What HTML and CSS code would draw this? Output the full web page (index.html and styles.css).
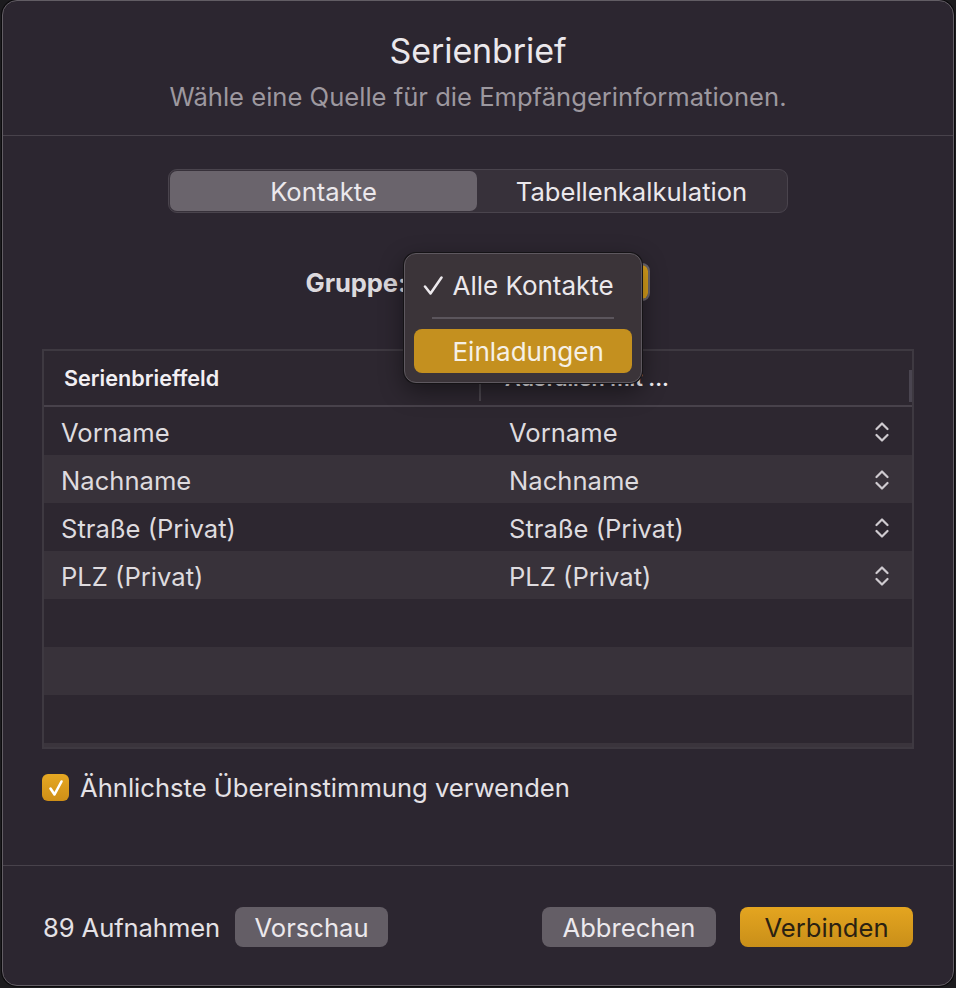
FILE: index.html
```html
<!DOCTYPE html>
<html lang="de">
<head>
<meta charset="utf-8">
<title>Serienbrief</title>
<link rel="stylesheet" href="styles.css">
</head>
<body>
<div class="window">
  <header class="sheet-head">
    <h1 class="title">Serienbrief</h1>
    <p class="subtitle">Wähle eine Quelle für die Empfängerinformationen.</p>
  </header>

  <main class="sheet-body">
    <div class="segmented">
      <div class="seg seg-active">Kontakte</div>
      <div class="seg">Tabellenkalkulation</div>
    </div>

    <div class="group-row">
      <span class="group-label">Gruppe:</span>
      <div class="popup-wrap">
        <div class="popup">
          <span class="popup-text"></span>
          <span class="popup-arrow"></span>
        </div>
        <div class="menu">
          <div class="menu-item">
            <svg class="menu-check" width="20" height="20" viewBox="0 0 20 20"><polyline points="2,10.5 7.5,17.5 18.5,1.5" fill="none" stroke="#ece9ed" stroke-width="2.5" stroke-linecap="round" stroke-linejoin="round"/></svg>
            <span>Alle Kontakte</span>
          </div>
          <div class="menu-sep"></div>
          <div class="menu-item menu-item-hl"><span>Einladungen</span></div>
        </div>
      </div>
    </div>

    <div class="table">
      <div class="thead">
        <div class="th th-first">Serienbrieffeld</div>
        <div class="th-divider"></div>
        <div class="th th-second">Ausfüllen mit ...</div>
        <div class="th-bar"></div>
      </div>
      <div class="row">
        <div class="cell">Vorname</div><div class="cell">Vorname</div>
        <svg class="stepper" width="14" height="22" viewBox="0 0 14 22"><polyline points="1.5,8 7,2.5 12.5,8" fill="none" stroke="#cfcbd0" stroke-width="2.2" stroke-linecap="round" stroke-linejoin="round"/><polyline points="1.5,14 7,19.5 12.5,14" fill="none" stroke="#cfcbd0" stroke-width="2.2" stroke-linecap="round" stroke-linejoin="round"/></svg>
      </div>
      <div class="row row-alt">
        <div class="cell">Nachname</div><div class="cell">Nachname</div>
        <svg class="stepper" width="14" height="22" viewBox="0 0 14 22"><polyline points="1.5,8 7,2.5 12.5,8" fill="none" stroke="#cfcbd0" stroke-width="2.2" stroke-linecap="round" stroke-linejoin="round"/><polyline points="1.5,14 7,19.5 12.5,14" fill="none" stroke="#cfcbd0" stroke-width="2.2" stroke-linecap="round" stroke-linejoin="round"/></svg>
      </div>
      <div class="row">
        <div class="cell">Straße (Privat)</div><div class="cell">Straße (Privat)</div>
        <svg class="stepper" width="14" height="22" viewBox="0 0 14 22"><polyline points="1.5,8 7,2.5 12.5,8" fill="none" stroke="#cfcbd0" stroke-width="2.2" stroke-linecap="round" stroke-linejoin="round"/><polyline points="1.5,14 7,19.5 12.5,14" fill="none" stroke="#cfcbd0" stroke-width="2.2" stroke-linecap="round" stroke-linejoin="round"/></svg>
      </div>
      <div class="row row-alt">
        <div class="cell">PLZ (Privat)</div><div class="cell">PLZ (Privat)</div>
        <svg class="stepper" width="14" height="22" viewBox="0 0 14 22"><polyline points="1.5,8 7,2.5 12.5,8" fill="none" stroke="#cfcbd0" stroke-width="2.2" stroke-linecap="round" stroke-linejoin="round"/><polyline points="1.5,14 7,19.5 12.5,14" fill="none" stroke="#cfcbd0" stroke-width="2.2" stroke-linecap="round" stroke-linejoin="round"/></svg>
      </div>
      <div class="row"></div>
      <div class="row row-alt"></div>
      <div class="row"></div>
      <div class="table-foot"></div>
    </div>

    <label class="check-row">
      <span class="checkbox">
        <svg width="16" height="18" viewBox="0 0 16 18"><polyline points="2.5,9.5 6.5,15.5 13.5,2.5" fill="none" stroke="#ffffff" stroke-width="2.6" stroke-linecap="round" stroke-linejoin="round"/></svg>
      </span>
      <span class="check-label">Ähnlichste Übereinstimmung verwenden</span>
    </label>
  </main>

  <footer class="sheet-foot">
    <div class="foot-left">
      <span class="count">89 Aufnahmen</span>
      <button class="btn btn-gray btn-preview">Vorschau</button>
    </div>
    <div class="foot-right">
      <button class="btn btn-gray btn-cancel">Abbrechen</button>
      <button class="btn btn-primary">Verbinden</button>
    </div>
  </footer>
</div>
</body>
</html>
```

FILE: styles.css
```css
* { box-sizing: border-box; }

html, body {
  margin: 0;
  padding: 0;
  background: #1c1b1e;
}

body {
  font-family: Inter, "Noto Sans", sans-serif;
  color: #e4e1e5;
  width: 956px;
  height: 988px;
  overflow: hidden;
}

.window {
  margin-left: 2px;
  width: 952px;
  height: 986px;
  background: #2c2630;
  border: 1px solid #625d64;
  border-radius: 15px;
  box-shadow: 0 0 0 1px #0c0b0d;
  display: flex;
  flex-direction: column;
  overflow: hidden;
}

/* Header */
.sheet-head {
  height: 135px;
  border-bottom: 1px solid #48424b;
  padding-top: 30px;
  text-align: center;
  flex: none;
}

.title {
  margin: 0;
  font-size: 34px;
  font-weight: 400;
  line-height: 40px;
  color: #ebe8ec;
  letter-spacing: -0.1px;
}

.subtitle {
  margin: 10px 0 0;
  font-size: 25.6px;
  line-height: 32px;
  color: #9d989f;
}

/* Body */
.sheet-body {
  flex: 1;
  display: flex;
  flex-direction: column;
  align-items: stretch;
}

.segmented {
  margin: 33px auto 0;
  width: 620px;
  height: 44px;
  border: 1px solid #4a444d;
  border-radius: 9px;
  background: #37313a;
  padding: 1px;
  display: flex;
}

.seg {
  flex: 1;
  display: flex;
  align-items: center;
  justify-content: center;
  font-size: 25.6px;
  color: #ebe8ec;
}

.seg-active {
  flex: none;
  width: 307px;
  background: #6a646c;
  border-radius: 7px;
}

/* Gruppe */
.group-row {
  margin-top: 50px;
  height: 38px;
  display: flex;
  align-items: center;
  justify-content: center;
  gap: 4px;
}

.group-label {
  font-size: 25.6px;
  font-weight: 700;
  color: #dcd9dd;
  letter-spacing: -0.1px;
}

.popup-wrap {
  position: relative;
}

.popup {
  width: 240px;
  height: 38px;
  border: 2px solid #6b666d;
  border-radius: 8px;
  background: #5f5961;
  display: flex;
  align-items: center;
  overflow: hidden;
}

.popup-text {
  flex: 1;
}

.popup-arrow {
  width: 28px;
  align-self: stretch;
  background: #d9a01c;
  border-radius: 0 6px 6px 0;
}

.menu {
  position: absolute;
  left: -6px;
  top: -10px;
  width: 238px;
  height: 130px;
  background: #3b3439;
  border: 1px solid #5e585f;
  border-radius: 12px;
  box-shadow: 0 0 0 1px #151316, 0 8px 24px rgba(0, 0, 0, 0.45);
  padding: 9px;
  z-index: 5;
}

.menu-item {
  height: 44px;
  position: relative;
  display: flex;
  align-items: center;
  padding-left: 38px;
  font-size: 26px;
  color: #ebe8ec;
  border-radius: 8px;
}

.menu-check {
  position: absolute;
  left: 9px;
  top: 13px;
}

.menu-sep {
  height: 2px;
  background: #5b555c;
  margin: 10px 18px 10px 18px;
}

.menu-item-hl {
  background: #c4901f;
  color: #f6f0e6;
}

/* Table */
.table {
  margin: 48px 0 0 39px;
  width: 872px;
  border: 2px solid #3e3941;
  background: #2d2730;
}

.thead {
  height: 56px;
  border-bottom: 2px solid #48424b;
  display: flex;
  align-items: center;
}

.th {
  font-size: 21.6px;
  font-weight: 600;
  color: #f2eff3;
}

.th-first {
  width: 435px;
  padding-left: 20px;
}

.th-divider {
  width: 2px;
  height: 30px;
  margin-top: 16px;
  background: #4a454d;
}

.th-second {
  flex: 1;
  padding-left: 24px;
}

.th-bar {
  width: 3px;
  height: 32px;
  margin-top: 16px;
  background: #4a4550;
}

.row {
  height: 48px;
  display: grid;
  grid-template-columns: 465px 1fr auto;
  align-items: center;
  background: #2d2730;
  padding-right: 23px;
  padding-top: 2px;
}

.row-alt {
  background: #38323a;
}

.cell {
  font-size: 25.6px;
  color: #dedbdf;
}

.cell:first-child {
  padding-left: 17px;
}

.table-foot {
  height: 4px;
  background: #3a343c;
}

/* Checkbox */
.check-row {
  margin: 23px 0 0 39px;
  display: flex;
  align-items: center;
  gap: 11px;
}

.checkbox {
  width: 27px;
  height: 27px;
  border-radius: 6px;
  background: linear-gradient(#e6a823, #cf8f17);
  display: flex;
  align-items: center;
  justify-content: center;
}

.check-label {
  font-size: 25.6px;
  color: #e4e1e5;
}

/* Footer */
.sheet-foot {
  flex: none;
  height: 120px;
  border-top: 1px solid #48424b;
  display: flex;
  justify-content: space-between;
  align-items: flex-start;
  padding: 41px 40px 0 40px;
}

.foot-left, .foot-right {
  display: flex;
  align-items: center;
}

.foot-left { gap: 15px; }
.foot-right { gap: 24px; }

.count {
  font-size: 25.6px;
  color: #e4e1e5;
  letter-spacing: -0.1px;
}

.btn {
  height: 40px;
  border: none;
  border-radius: 8px;
  font-family: Inter, "Noto Sans", sans-serif;
  font-size: 25.6px;
  padding: 0;
}

.btn-gray {
  background: #645e66;
  color: #ece9ed;
}

.btn-preview { width: 153px; }
.btn-cancel { width: 174px; }

.btn-primary {
  width: 173px;
  background: linear-gradient(#e4a520, #c98f19);
  color: #2a2112;
}
```
